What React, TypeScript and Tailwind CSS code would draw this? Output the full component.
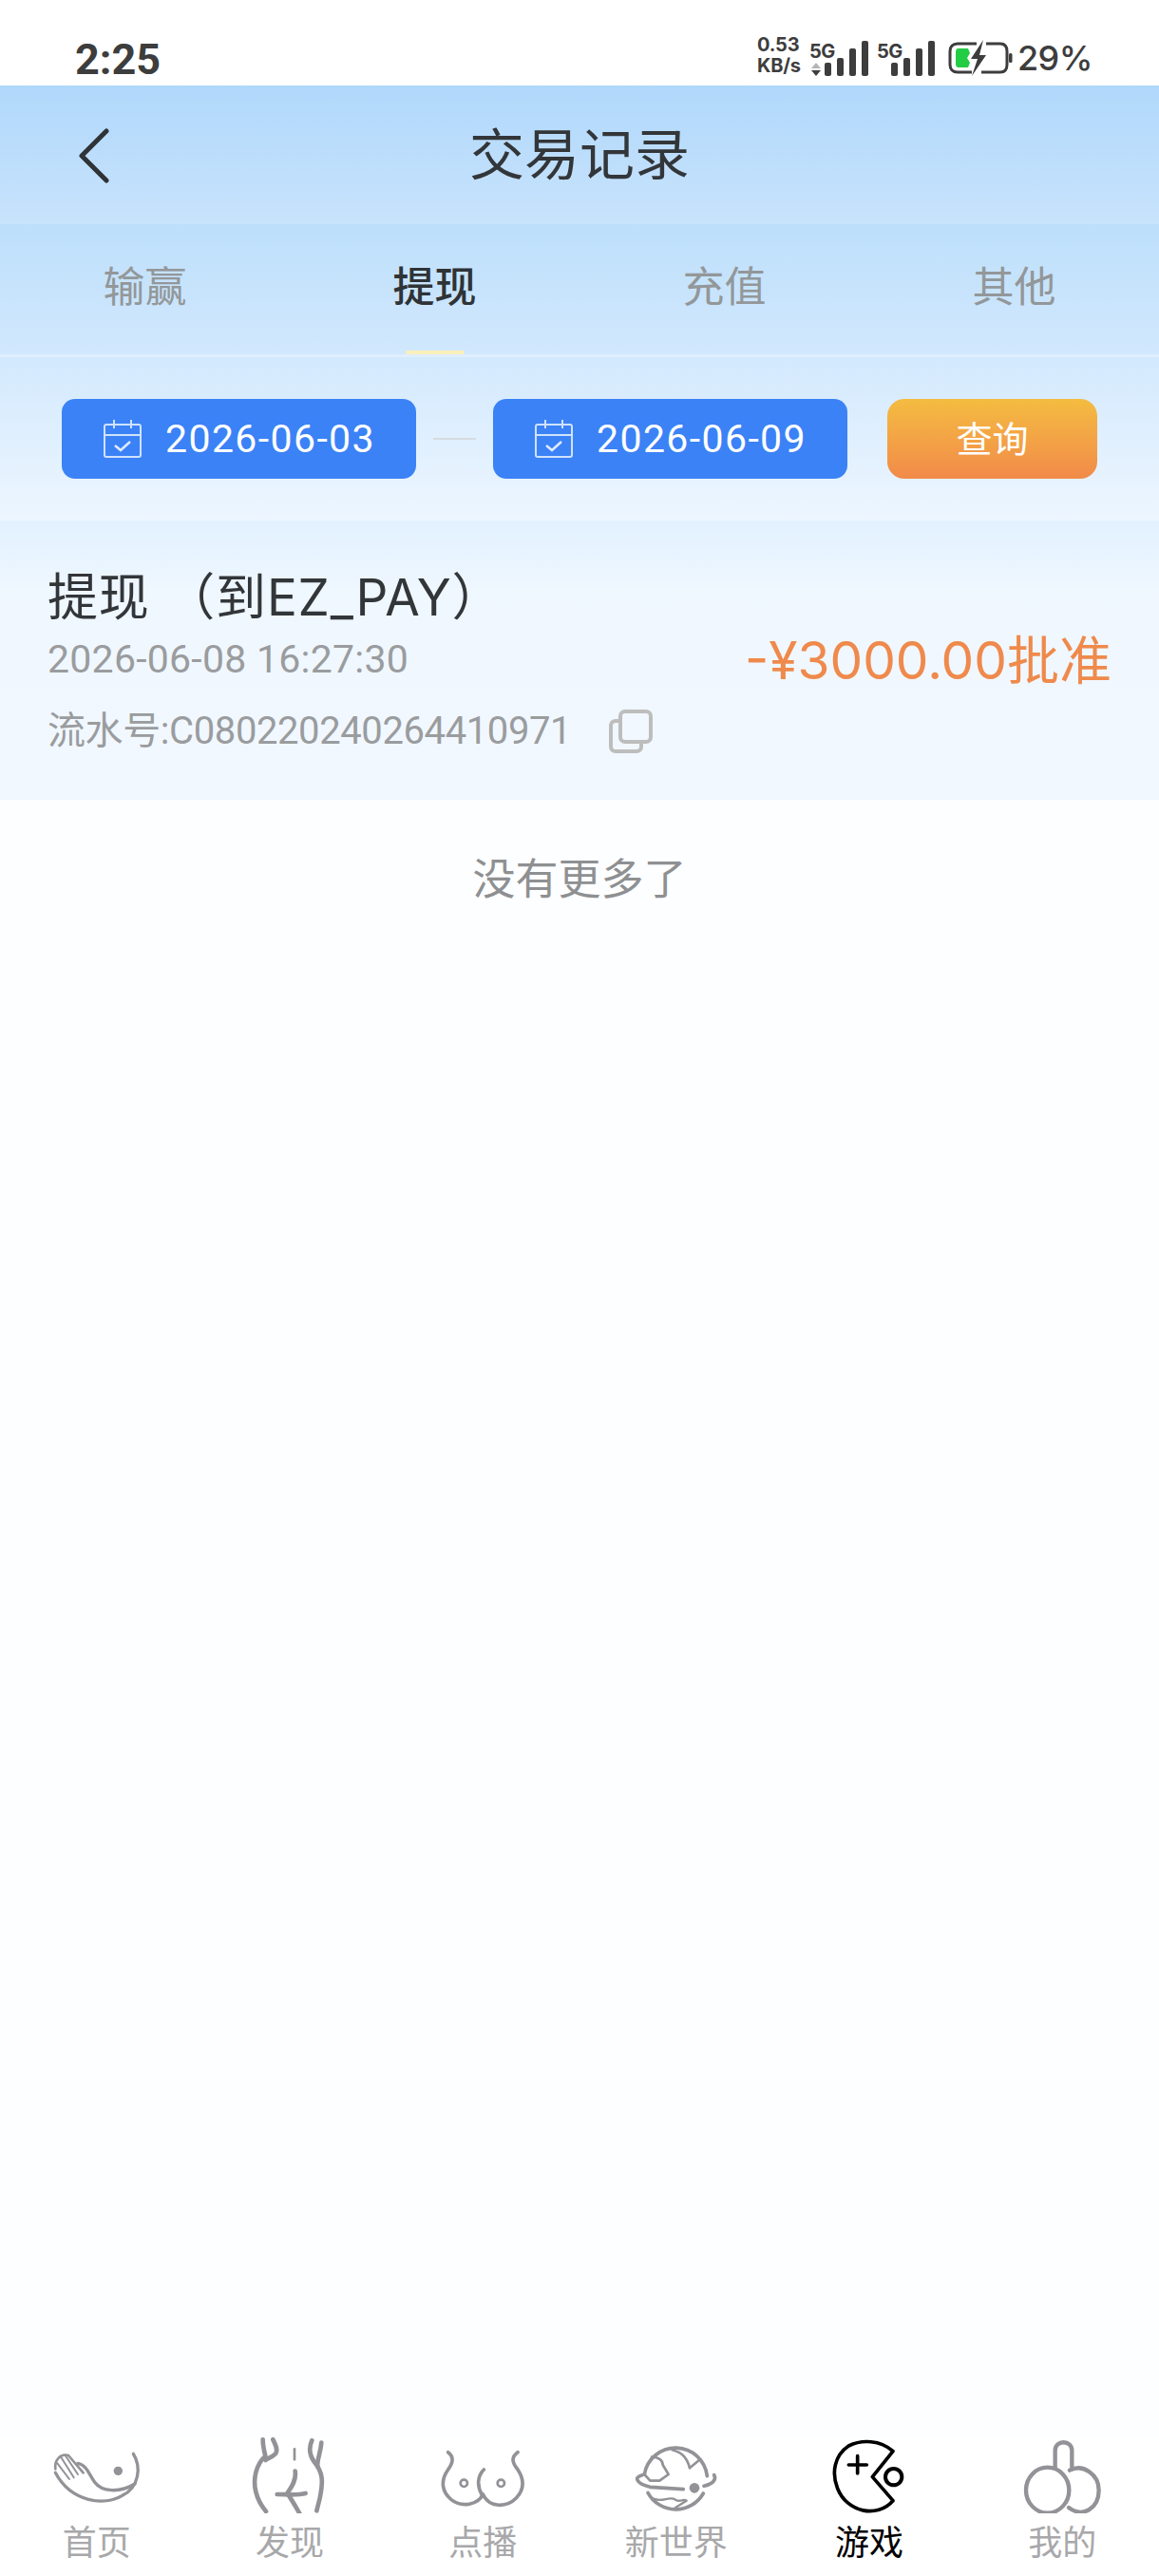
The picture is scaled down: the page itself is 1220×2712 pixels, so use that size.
const F = "font-['Inter','Noto_Sans_CJK_SC',sans-serif]";
const R = "font-['Roboto','Noto_Sans_CJK_SC',sans-serif]";

function Bars() {
  return (
    <svg width="46" height="38" viewBox="0 0 46 38" className="block">
      <rect x="0" y="24" width="7" height="14" rx="2" fill="#3d3d3d" />
      <rect x="13" y="19" width="7" height="19" rx="2" fill="#3d3d3d" />
      <rect x="26" y="9" width="7" height="29" rx="2" fill="#3d3d3d" />
      <rect x="39" y="1" width="7" height="37" rx="2" fill="#3d3d3d" />
    </svg>
  );
}

function Battery() {
  return (
    <svg width="70" height="40" viewBox="0 0 70 40" className="block">
      <path d="M31 5H11C6 5 3 8 3 13V27C3 32 6 35 11 35H26" fill="none" stroke="#3d3d3d" strokeWidth="3" />
      <path d="M41 5H56C61 5 63 8 63 13V27C63 32 61 35 56 35H36" fill="none" stroke="#3d3d3d" strokeWidth="3" />
      <rect x="65" y="15" width="3.5" height="10" rx="1.5" fill="#3d3d3d" />
      <path d="M12 10H22L24 15 21 20 24 25 22 30H12C9.500 30 9 28 9 26V14C9 12 9.500 10 12 10Z" fill="#22cc44" />
      <path d="M38 1L25 21H32L26 39 41 17H34L38 1Z" fill="#3d3d3d" />
    </svg>
  );
}

function Calendar() {
  return (
    <svg width="42" height="42" viewBox="0 0 42 42" fill="none" stroke="#cfe2fd" strokeWidth="2" className="block shrink-0">
      <rect x="2" y="6" width="38" height="34" rx="2" />
      <path d="M2 17H40M12 1V10M30 1V10" />
      <path d="M13 28L19 33 29 24" strokeWidth="2.500" stroke="#dfeafe" />
    </svg>
  );
}

function DateChip({ value }: { value: string }) {
  return (
    <div className="flex h-[84px] w-[373px] items-center rounded-[14px] bg-[#3b82f6] pl-[43px]">
      <Calendar />
      <span className={`ml-[24px] text-[41px] leading-none tracking-[1.4px] text-white ${R}`}>{value}</span>
    </div>
  );
}

function Copy() {
  return (
    <svg width="46" height="46" viewBox="0 0 46 46" fill="none" stroke="#bdbdbd" strokeWidth="4" className="block">
      <rect x="12" y="2" width="32" height="32" rx="5" />
      <path d="M12 12H7C4 12 2 14 2 17V39C2 42 4 44 7 44H29C32 44 34 42 34 39V34" />
    </svg>
  );
}

const gray = "#929297";

const icons = [
  {
    label: "首页",
    view: "155 78 300 240",
    body: (
      <g fill="none" stroke={gray} strokeWidth="10" strokeLinecap="round" strokeLinejoin="round">
        <path d="M420 130C445 170 440 235 385 262C330 295 225 285 174 190" />
        <path d="M245 160C272 165 280 195 298 220C320 250 375 255 425 225" />
        <path d="M174 178C170 150 190 128 215 135L262 190" strokeWidth="8" />
        <path d="M190 138L232 205M205 135L245 195M180 160L218 210" strokeWidth="6" />
        <circle cx="372" cy="184" r="14" fill={gray} stroke="none" />
      </g>
    ),
  },
  {
    label: "发现",
    view: "765 78 300 240",
    body: (
      <g fill="none" stroke={gray} strokeWidth="14" strokeLinecap="round" strokeLinejoin="round" transform="translate(-420 0)">
        <path d="M1250 85C1250 105 1255 125 1258 137C1228 165 1218 210 1228 250C1234 275 1250 300 1260 312" />
        <path d="M1282 85C1292 105 1298 120 1290 130C1280 140 1265 145 1258 150" />
        <path d="M1405 88C1395 110 1398 135 1412 155C1442 190 1440 220 1430 270L1420 310" />
        <path d="M1435 95C1432 130 1420 150 1423 170" />
        <path d="M1350 115V148" strokeWidth="8" />
        <path d="M1352 185C1357 215 1337 240 1327 255C1342 275 1355 300 1368 322" />
        <path d="M1295 258C1325 258 1360 262 1385 255" />
      </g>
    ),
  },
  {
    label: "点播",
    view: "114 78 300 240",
    body: (
      <g fill="none" stroke={gray} strokeWidth="11" strokeLinecap="round" strokeLinejoin="round">
        <path d="M155 125C175 140 170 160 155 180C130 215 135 250 165 275C200 302 250 290 265 258C285 302 340 300 370 270C398 240 395 210 375 180C355 155 355 140 375 125" />
        <path d="M268 180C248 200 245 230 262 260" />
        <circle cx="205" cy="223" r="11" strokeWidth="8" />
        <circle cx="322" cy="223" r="11" strokeWidth="8" />
      </g>
    ),
  },
  {
    label: "新世界",
    view: "723 78 300 240",
    body: (
      <g fill="none" stroke={gray} strokeWidth="11" strokeLinecap="round" strokeLinejoin="round">
        <path d="M772 195A100 100 0 0 1 970 200" />
        <path d="M783 253A100 100 0 0 0 958 255" />
        <path d="M765 197C735 205 750 225 790 235L895 242" />
        <circle cx="930" cy="238" r="16" fill={gray} stroke="none" />
        <path d="M960 232C990 225 1000 210 992 197" />
        <path d="M795 140C815 140 830 150 830 165L848 195L820 215L790 215L772 195" strokeWidth="8" />
        <path d="M860 118C885 125 905 135 915 175L945 150" strokeWidth="8" />
        <path d="M800 272C830 285 850 262 870 275C885 285 895 270 905 278L870 300" strokeWidth="7" />
      </g>
    ),
  },
  {
    label: "游戏",
    active: true,
    view: "135 78 300 240",
    body: (
      <g fill="none" stroke="#000" strokeWidth="11" strokeLinecap="round" strokeLinejoin="round">
        <path d="M360 122C320 85 260 85 220 105C175 135 165 190 185 240C215 315 310 335 360 278L295 203Z" />
        <path d="M248 137V192M220 165H277" />
        <circle cx="362" cy="203" r="26" strokeWidth="12" />
      </g>
    ),
  },
  {
    label: "我的",
    view: "744 78 300 240",
    body: (
      <g fill="none" stroke={gray} strokeWidth="13" strokeLinecap="round" strokeLinejoin="round">
        <ellipse cx="848" cy="245" rx="68" ry="72" />
        <path d="M918 182C960 160 1010 195 1010 245C1010 300 960 335 915 300" />
        <path d="M872 175V120C872 85 925 85 925 120V178" />
      </g>
    ),
  },
];

const tabs = ["输赢", "提现", "充值", "其他"];

export default function App() {
  return (
    <div className={`flex h-[2712px] w-[1220px] flex-col overflow-hidden bg-white ${F}`}>
      {/* status bar */}
      <div className="flex h-[90px] shrink-0 items-end justify-between bg-white pb-[10px] pl-[79px] pr-[70px]">
        <span className={`text-[45px] font-bold leading-[34px] text-[#3d3d3d] ${R}`}>2:25</span>
        <div className="flex items-end text-[#3d3d3d]">
          <div className="flex w-[47px] flex-col text-[20px] font-bold leading-[22px] tracking-[-0.2px]">
            <span>0.53</span>
            <span>KB/s</span>
          </div>
          <div className="ml-[8px] flex w-[29px] flex-col items-start">
            <span className="text-[20px] font-bold leading-[24px] tracking-[-0.6px]">5G</span>
            <svg width="10" height="14" viewBox="0 0 10 14" className="ml-[2px]">
              <path d="M5 0L10 6H0Z" fill="#b5b5b5" />
              <path d="M5 14L10 8H0Z" fill="#3d3d3d" />
            </svg>
          </div>
          <div className="-ml-[13px]"><Bars /></div>
          <span className="mb-[14px] ml-[9px] w-[28px] text-[20px] font-bold leading-[24px] tracking-[-0.6px]">5G</span>
          <div className="-ml-[13px]"><Bars /></div>
          <div className="-mb-[1px] ml-[13px]"><Battery /></div>
          <span className="w-[83px] text-right text-[36px] font-medium leading-[38px] tracking-[-0.5px]">29%</span>
        </div>
      </div>

      {/* title */}
      <div className="relative flex h-[146px] shrink-0 items-center justify-center bg-gradient-to-b from-[#b0d8fb] to-[#c8e3fc]">
        <svg width="36" height="58" viewBox="0 0 36 58" fill="none" stroke="#2f3336" strokeWidth="5" strokeLinecap="round" strokeLinejoin="round" className="absolute left-[81px] top-[45px]">
          <path d="M31 3L5 29 31 55" />
        </svg>
        <span className="text-[58px] leading-none text-[#333639]">交易记录</span>
      </div>

      {/* tabs */}
      <div className="grid h-[140px] shrink-0 grid-cols-4 border-b-[3px] border-[#e0eefd] bg-gradient-to-b from-[#bddffb] to-[#d1e8fd]">
        {tabs.map((t, i) => (
          <div key={t} className="relative flex items-center justify-center pb-[5px]">
            <span className={i === 1 ? "text-[44px] font-medium leading-none text-[#2f3336]" : "text-[44px] leading-none text-[#939799]"}>{t}</span>
            {i === 1 && <div className="absolute bottom-0 left-1/2 h-[4px] w-[61px] -translate-x-1/2 bg-[#f9f0bb]" />}
          </div>
        ))}
      </div>

      {/* filter */}
      <div className="flex h-[172px] shrink-0 items-start bg-gradient-to-b from-[#d3e9fd] to-[#edf6ff] pl-[65px] pt-[44px]">
        <DateChip value="2026-06-03" />
        <div className="mx-[18px] mt-[41px] h-[2px] w-[45px] bg-[#d6dcdf]" />
        <DateChip value="2026-06-09" />
        <div className="ml-[42px] flex h-[84px] w-[221px] items-center justify-center rounded-[18px] bg-gradient-to-b from-[#f4bc40] to-[#f18a49] text-[38px] leading-none text-white">查询</div>
      </div>

      {/* record */}
      <div className="flex h-[294px] shrink-0 items-center justify-between bg-gradient-to-b from-[#e2f1ff] via-[#eff7ff] via-25% to-[#f2f8ff] pl-[50px] pr-[50px]">
        <div className="flex flex-col items-start pt-[2px]">
          <span className="text-[53px] leading-[64px] tracking-[0.8px] text-[#333639]">提现 （到EZ_PAY）</span>
          <span className={`mt-[8px] text-[41px] leading-[50px] tracking-[0.25px] text-[#9a9c9e] ${R}`}>2026-06-08 16:27:30</span>
          <div className="mt-[26px] flex items-center">
            <span className={`text-[40px] leading-[50px] tracking-[-0.4px] text-[#9a9c9e] ${R}`}>流水号:C080220240264410971</span>
            <div className="ml-[40px]"><Copy /></div>
          </div>
        </div>
        <span className="text-[55px] leading-none text-[#ef8a4c]">-¥3000.00批准</span>
      </div>

      {/* body */}
      <div className="flex flex-1 flex-col bg-[#fdfeff]">
        <div className="pt-[59px] text-center text-[45px] leading-[50px] text-[#8e9092]">没有更多了</div>
      </div>

      {/* nav */}
      <div className="grid h-[146px] shrink-0 grid-cols-6 bg-white">
        {icons.map((it) => (
          <div key={it.label} className="flex flex-col items-center">
            <svg width="100" height="80" viewBox={it.view} className="block">{it.body}</svg>
            <span className={it.active ? "mt-[13px] text-[36px] leading-[36px] text-black" : "mt-[13px] text-[36px] leading-[36px] text-[#a8a8aa]"}>{it.label}</span>
          </div>
        ))}
      </div>
    </div>
  );
}
